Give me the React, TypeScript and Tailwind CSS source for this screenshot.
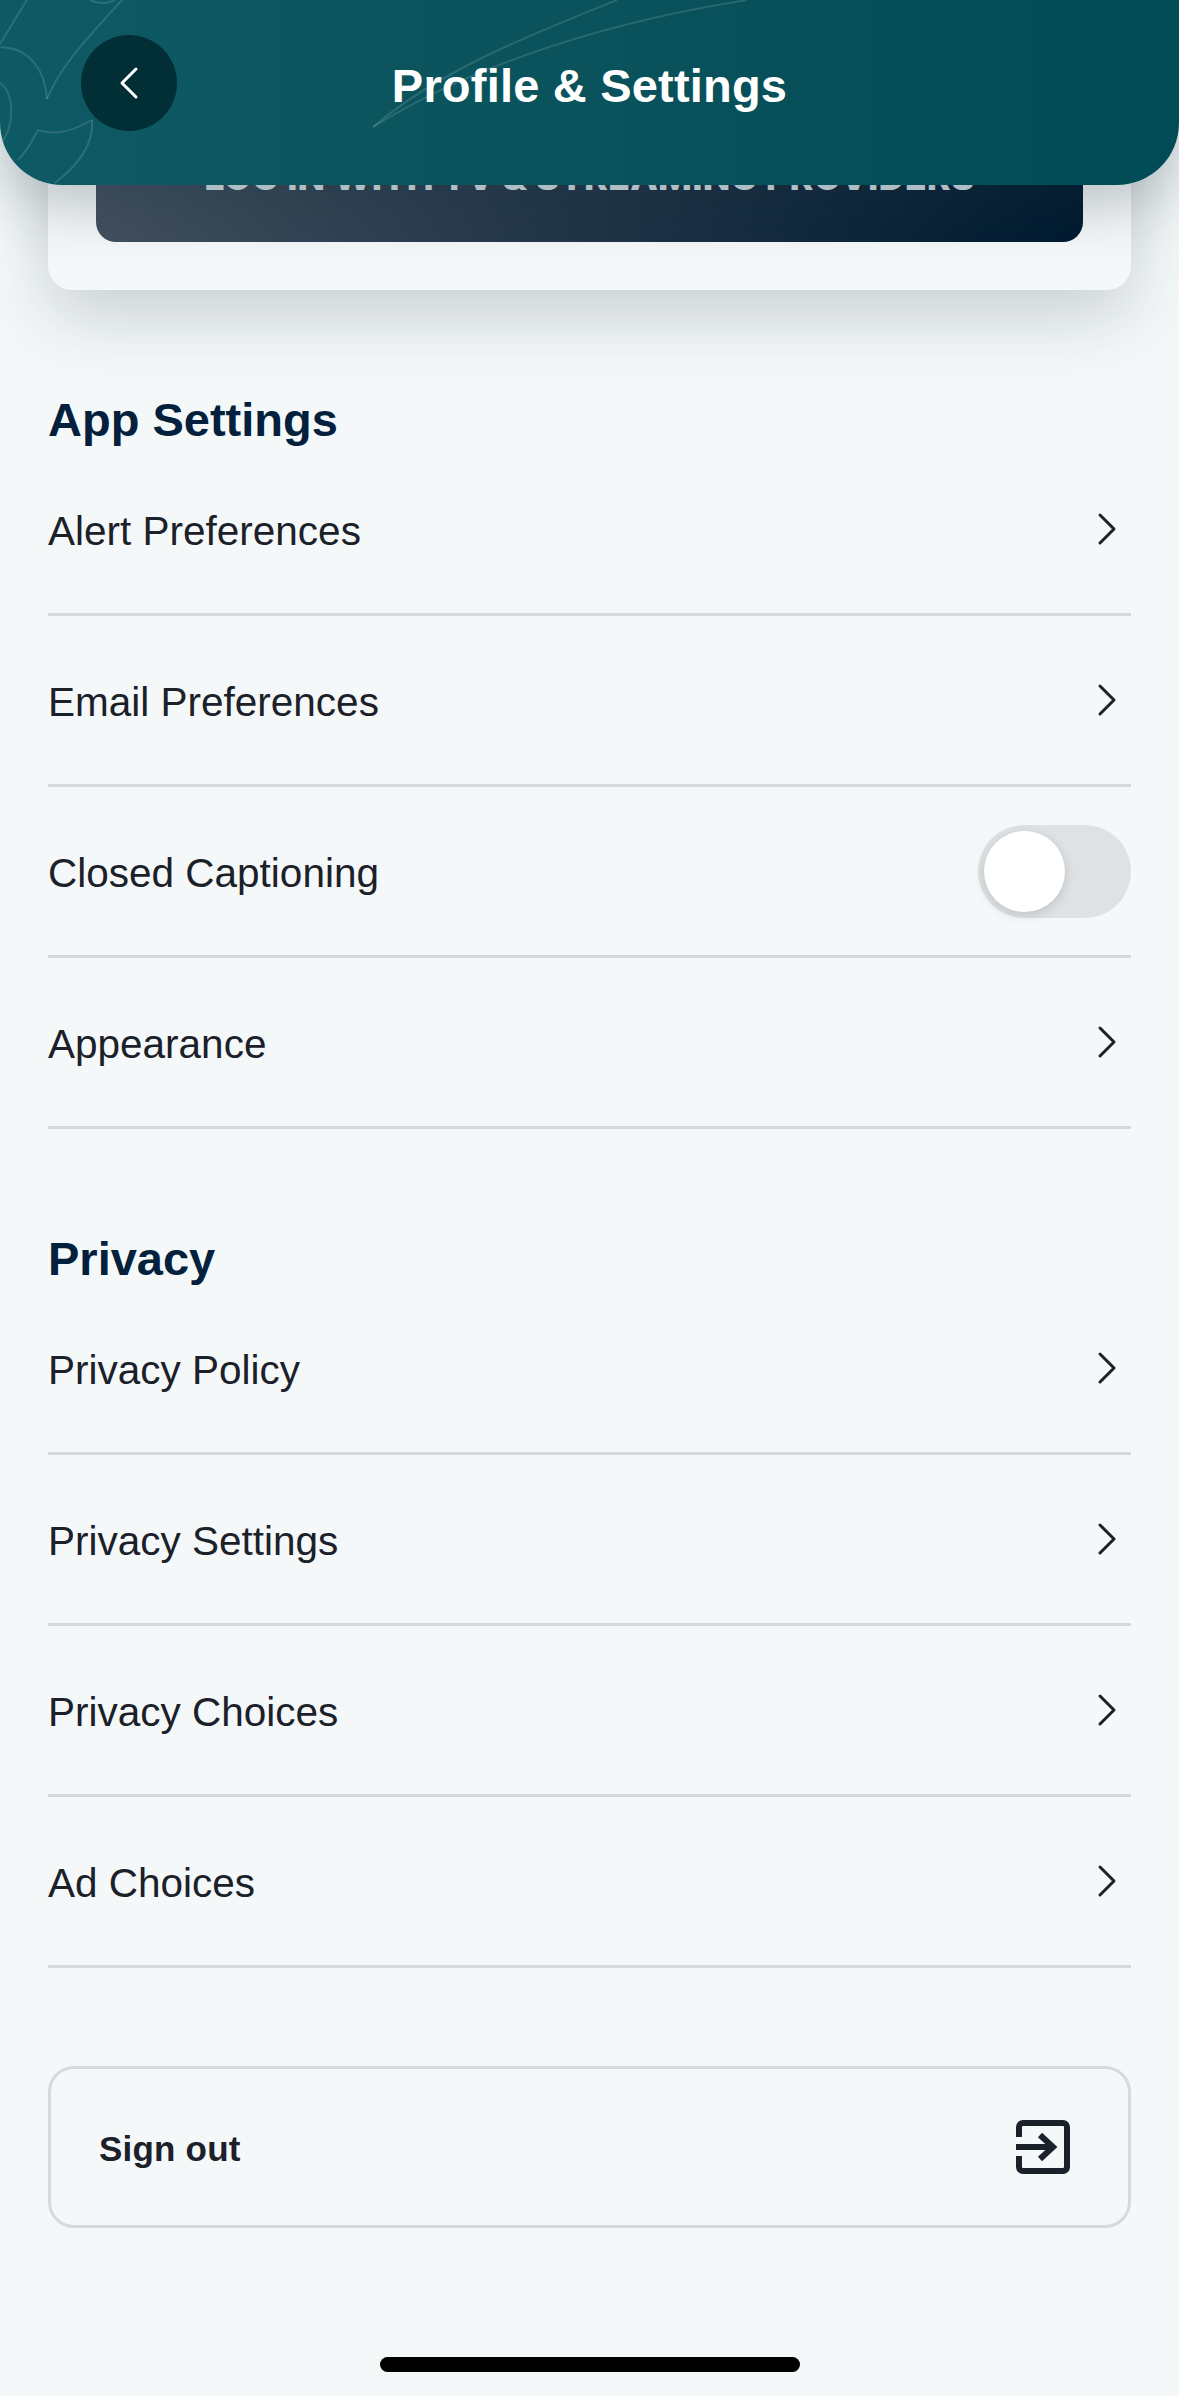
import { ReactNode } from "react";

function ChevronRight() {
  return (
    <svg width="22" height="34" viewBox="0 0 22 34" fill="none" className="text-[#1b2029]">
      <path d="M3 3L17 17L3 31" stroke="currentColor" strokeWidth="3" strokeLinecap="round" strokeLinejoin="round" />
    </svg>
  );
}

function Toggle() {
  return (
    <div className="flex items-center w-[153px] h-[93px] rounded-full bg-[#dfe2e4] pl-[6px]">
      <div className="w-[81px] h-[81px] rounded-full bg-white shadow-[0_3px_12px_rgba(0,0,0,0.14)]" />
    </div>
  );
}

function Row({ label, right }: { label: string; right?: ReactNode }) {
  return (
    <div className="flex items-center justify-between h-[171px] border-b-[3px] border-[#d3d9dd]">
      <span className="pt-[3px] text-[40.5px] leading-[48px] text-[#1b2029]">{label}</span>
      <div className="flex items-center justify-end">{right ?? <div className="mr-[12px]"><ChevronRight /></div>}</div>
    </div>
  );
}

function SectionTitle({ children }: { children: ReactNode }) {
  return <h2 className="h-[50px] flex items-center text-[47px] font-bold text-[#03203c]">{children}</h2>;
}

function HeaderArt() {
  return (
    <svg className="absolute inset-0" width="1179" height="185" viewBox="0 0 1179 185" fill="none">
      <g stroke="#ffffff" strokeOpacity="0.13" strokeWidth="2">
        <path d="M47 99C60 65 95 30 122 0" />
        <path d="M0 47C30 48 45 70 47 99" />
        <path d="M0 44C10 28 18 14 27 0" />
        <path d="M0 83C14 92 16 125 0 145" />
        <path d="M90 0C98 4 108 4 115 0" />
        <path d="M38 130C55 136 75 130 92 120" />
        <path d="M38 130C32 142 26 152 18 160" />
        <path d="M92 120C94 145 78 165 55 183" />
        <path d="M373 127C440 70 530 35 617 0" />
        <path d="M373 127C480 60 620 20 747 0" />
      </g>
    </svg>
  );
}

export default function App() {
  return (
    <div className="relative w-[1179px] h-[2396px] overflow-hidden bg-[#f4f8f9] font-['Liberation_Sans',sans-serif]">
      {/* Top bar sits over the scrolled card */}
      <header className="absolute inset-x-0 top-0 z-10 h-[185px] rounded-b-[62px] overflow-hidden bg-gradient-to-r from-[#0e5a64] via-[#0a525c] to-[#014b56] shadow-[0_20px_60px_rgba(30,50,60,0.28)]">
        <HeaderArt />
        <div className="relative flex items-center h-[166px] pl-[81px]">
          <button className="flex items-center justify-center w-[96px] h-[96px] rounded-full bg-[#022e35]">
            <svg width="22" height="34" viewBox="0 0 22 34" fill="none">
              <path d="M18 3L4 17L18 31" stroke="white" strokeWidth="3" strokeLinecap="round" strokeLinejoin="round" />
            </svg>
          </button>
          <h1 className="absolute inset-x-0 pt-[6px] text-center text-[47px] tracking-[0.2px] font-bold text-white">Profile &amp; Settings</h1>
        </div>
      </header>

      <div className="px-12">
        <div className="h-[290px] pt-[112px] px-12 rounded-b-[24px] bg-[#f5f8f9] shadow-[0_24px_70px_rgba(40,60,70,0.22)]">
          <div className="flex items-center justify-center h-[130px] rounded-b-[20px] bg-gradient-to-r from-[#42505f] to-[#001a30]">
            <span className="font-['Inter',sans-serif] text-[36px] font-extrabold uppercase text-[#d5e2e8] tracking-[0.2px] whitespace-nowrap">Log in with TV &amp; Streaming Providers</span>
          </div>
        </div>

        <section className="mt-[105px]">
          <SectionTitle>App Settings</SectionTitle>
          <Row label="Alert Preferences" />
          <Row label="Email Preferences" />
          <Row label="Closed Captioning" right={<Toggle />} />
          <Row label="Appearance" />
        </section>

        <section className="mt-[105px]">
          <SectionTitle>Privacy</SectionTitle>
          <Row label="Privacy Policy" />
          <Row label="Privacy Settings" />
          <Row label="Privacy Choices" />
          <Row label="Ad Choices" />
        </section>

        <button className="flex items-center justify-between w-full h-[162px] mt-[98px] pl-[48px] pr-[58px] border-[3px] border-[#d3dae0] rounded-[26px]">
          <span className="pt-[5px] text-[35px] tracking-[0.2px] font-bold text-[#1b2029]">Sign out</span>
          <svg width="54" height="54" viewBox="0 0 54 54" fill="none" className="text-[#1a212b]">
            <path d="M3 17V7a4 4 0 0 1 4-4H47a4 4 0 0 1 4 4V47a4 4 0 0 1-4 4H7a4 4 0 0 1-4-4V36" stroke="currentColor" strokeWidth="6" />
            <path d="M0 27H36" stroke="currentColor" strokeWidth="6" />
            <path d="M24 15L37 27L24 39" stroke="currentColor" strokeWidth="6" />
          </svg>
        </button>

        <div className="w-[420px] h-[15px] mt-[129px] mx-auto rounded-full bg-black" />
      </div>
    </div>
  );
}
